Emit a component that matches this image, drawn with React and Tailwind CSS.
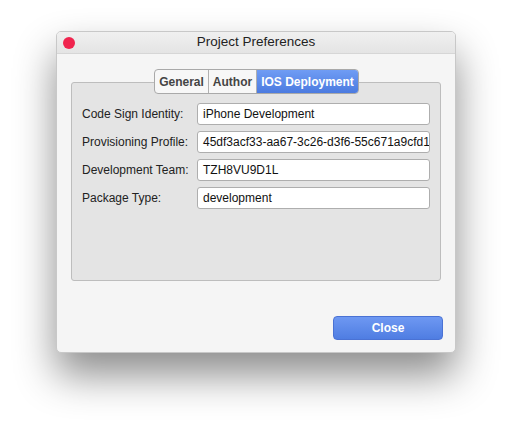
import React from 'react';

const fields = [
  { label: 'Code Sign Identity:', value: 'iPhone Development' },
  { label: 'Provisioning Profile:', value: '45df3acf33-aa67-3c26-d3f6-55c671a9cfd1' },
  { label: 'Development Team:', value: 'TZH8VU9D1L' },
  { label: 'Package Type:', value: 'development' },
];

const tabs = ['General', 'Author', 'IOS Deployment'];

export default function App() {
  const [active, setActive] = React.useState(2);

  return (
    <div className="w-[512px] h-[434px] bg-white pl-[56px] pt-[31px] font-['Liberation_Sans',Arial,sans-serif]">
      {/* Window */}
      <div className="w-[400px] h-[322px] flex flex-col rounded-[5px] bg-[#f5f5f5] border border-[#c8c8c8] shadow-[0_22px_40px_rgba(0,0,0,0.45)] overflow-hidden">
        {/* Title bar */}
        <div className="relative h-[22px] flex items-center justify-center bg-gradient-to-b from-[#f0f0f0] to-[#e4e4e4] border-b border-[#d6d6d6]">
          <div className="absolute left-[6px] top-[5px] w-[12px] h-[12px] rounded-full bg-[#f0244e]" />
          <span className="text-[13.5px] text-[#222]">Project Preferences</span>
        </div>

        {/* Body */}
        <div className="flex-1 flex flex-col px-[14px] pt-[15px]">
          <div className="relative">
            {/* Tabs */}
            <div className="flex justify-center">
              <div className="relative z-10 flex h-[25px] ml-[1px] rounded-[4px] border border-[#a9a9a9] bg-[#f7f7f7] overflow-hidden text-[12px] font-bold">
                {tabs.map((t, i) => (
                  <button
                    key={t}
                    onClick={() => setActive(i)}
                    className={`px-[4px] flex items-center ${i > 0 ? 'border-l border-[#b0b0b0]' : ''} ${active === i ? 'bg-gradient-to-b from-[#6f9cf4] to-[#4c7be0] text-white' : 'text-[#444]'}`}
                  >
                    {t}
                  </button>
                ))}
              </div>
            </div>

            {/* Group box */}
            <div className="-mt-[12px] h-[199px] rounded-[3px] border border-[#bdbdbd] bg-[#e4e4e4] pt-[20px] pl-[10px] pr-[10px] flex flex-col gap-[6px]">
              {fields.map(f => (
                <div key={f.label} className="flex items-center h-[22px]">
                  <span className="w-[115px] text-[12px] text-[#222]">{f.label}</span>
                  <div className="flex-1 h-[22px] rounded-[3px] border border-[#aeaeae] bg-white flex items-center pl-[5px] overflow-hidden whitespace-nowrap text-[12px] text-[#111]">
                    {f.value}
                  </div>
                </div>
              ))}
            </div>
          </div>

          {/* Footer */}
          <div className="flex justify-end mt-[35px] -mr-[2px]">
            <button className="w-[110px] h-[24px] rounded-[4px] border border-[#4a72d4] bg-gradient-to-b from-[#6e98f2] to-[#4f7de2] text-white text-[12px] font-bold">
              Close
            </button>
          </div>
        </div>
      </div>
    </div>
  );
}
